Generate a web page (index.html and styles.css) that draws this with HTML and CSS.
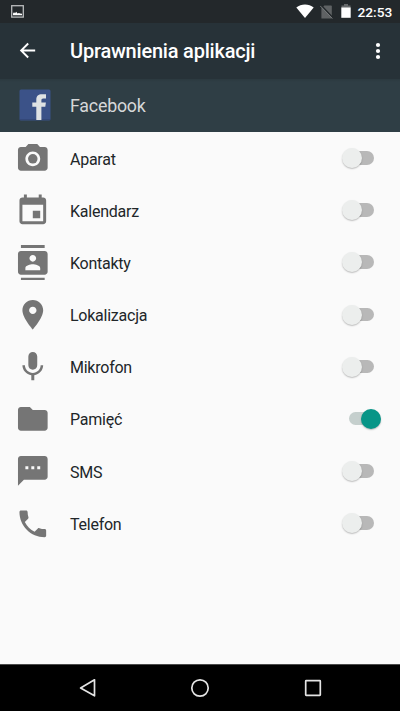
FILE: index.html
```html
<!DOCTYPE html>
<html lang="pl">
<head>
<meta charset="utf-8">
<title>Uprawnienia aplikacji</title>
<link rel="stylesheet" href="styles.css">
</head>
<body>
<div class="status">
  <svg class="shot" width="13" height="13" viewBox="0 0 13 13"><rect x=".7" y=".7" width="11.6" height="11.4" fill="none" stroke="#b9bbbc" stroke-width="1.3"/><path d="M2 10.3V8.500l1-1.200 1 1 1.200-1.500 1.300 1.700 1.500-.6 1 .6L11 8.800v1.500z" fill="#fff"/></svg>
  <svg class="wifi" width="18" height="14" viewBox="0 0 18 14"><path d="M9 14 .3 3.500C2.800 1.400 5.700.4 9 .4s6.200 1 8.700 3.100z" fill="#fff"/></svg>
  <svg class="sim" width="13" height="14" viewBox="0 0 13 14"><path d="M4.300.6h6.700q.8 0 .8.8v12H1.400V3.400z" fill="#5f6264"/><path d="M.8 0 13 12.800" stroke="#23282b" stroke-width="1.600"/><path d="M.2 .9 12.400 13.500" stroke="#777a7c" stroke-width="1"/></svg>
  <svg class="battery" width="10" height="15" viewBox="0 0 10 15"><path d="M3 0h4v1.500h2.500V4H.5V1.500H3z" fill="#66696b"/><path d="M.3 3.500h9.400v10.300H.3z" fill="#fff"/></svg>
  <span class="clock">22:53</span>
</div>
<header class="bar">
  <svg class="back" width="23" height="23" viewBox="0 0 24 24"><path fill="#fff" d="M20 11H7.830l5.590-5.590L12 4l-8 8 8 8 1.410-1.410L7.830 13H20v-2z"/></svg>
  <h1>Uprawnienia aplikacji</h1>
  <svg class="more" width="24" height="24" viewBox="0 0 24 24"><g fill="#fff"><circle cx="12" cy="6" r="2.100"/><circle cx="12" cy="12" r="2.100"/><circle cx="12" cy="18" r="2.100"/></g></svg>
</header>
<div class="app">
  <svg class="fb" width="32" height="32" viewBox="0 0 32 32"><rect x=".5" y=".5" width="31" height="31" rx="1.500" fill="#3b5288"/><path d="M.8 30.500h30.400" stroke="#344879"/><path fill="#dfe2e4" d="M17.300 31V17.800h-4v-4.200h4V10.500c0-3.700 2.100-5.300 5.600-5.300h4.100v4.300h-2.700c-1.500 0-1.900.7-1.900 2v2.100h4.500l-.6 4.200h-3.900V31z"/></svg>
  <span>Facebook</span>
</div>
<main>
  <div class="row"><svg class="icon" viewBox="0 0 24 24"><path fill-rule="evenodd" d="M9 2 7.170 4H4c-1.100 0-2 .9-2 2v12c0 1.100.9 2 2 2h16c1.100 0 2-.9 2-2V6c0-1.100-.9-2-2-2h-3.170L15 2H9zm3 15c-2.760 0-5-2.240-5-5s2.240-5 5-5 5 2.240 5 5-2.240 5-5 5z"/><circle cx="12" cy="12" r="3.200"/></svg><span>Aparat</span><i class="switch"></i></div>
  <div class="row"><svg class="icon" viewBox="0 0 24 24"><path d="M17 12h-5v5h5v-5zM16 1v2H8V1H6v2H5c-1.110 0-1.990.9-1.990 2L3 19c0 1.100.89 2 2 2h14c1.100 0 2-.9 2-2V5c0-1.100-.9-2-2-2h-1V1h-2zm3 18H5V8h14v11z"/></svg><span>Kalendarz</span><i class="switch"></i></div>
  <div class="row"><svg class="icon" viewBox="0 0 24 24"><path d="M20 0H4v2h16V0zM4 24h16v-2H4v2zM20 4H4c-1.100 0-2 .9-2 2v12c0 1.100.9 2 2 2h16c1.100 0 2-.9 2-2V6c0-1.100-.9-2-2-2zm-8 2.750c1.240 0 2.250 1.010 2.250 2.250s-1.010 2.250-2.250 2.250S9.750 10.240 9.750 9 10.760 6.750 12 6.750zM17 17H7v-1.500c0-1.670 3.330-2.500 5-2.500s5 .83 5 2.500V17z"/></svg><span>Kontakty</span><i class="switch"></i></div>
  <div class="row"><svg class="icon" viewBox="0 0 24 24"><path d="M12 2C8.130 2 5 5.130 5 9c0 5.250 7 13 7 13s7-7.750 7-13c0-3.870-3.130-7-7-7zm0 9.500c-1.380 0-2.500-1.120-2.500-2.500s1.120-2.500 2.500-2.500 2.500 1.120 2.500 2.500-1.120 2.500-2.500 2.500z"/></svg><span>Lokalizacja</span><i class="switch"></i></div>
  <div class="row"><svg class="icon" viewBox="0 0 24 24"><path d="M12 14c1.660 0 2.990-1.340 2.990-3L15 5c0-1.660-1.340-3-3-3S9 3.340 9 5v6c0 1.660 1.340 3 3 3zm5.300-3c0 3-2.540 5.100-5.300 5.100S6.700 14 6.700 11H5c0 3.410 2.720 6.230 6 6.720V21h2v-3.280c3.280-.48 6-3.300 6-6.720h-1.700z"/></svg><span>Mikrofon</span><i class="switch"></i></div>
  <div class="row"><svg class="icon" viewBox="0 0 24 24"><path d="M10 4H4c-1.100 0-1.990.9-1.990 2L2 18c0 1.100.9 2 2 2h16c1.100 0 2-.9 2-2V8c0-1.100-.9-2-2-2h-8l-2-2z"/></svg><span>Pamięć</span><i class="switch on"></i></div>
  <div class="row"><svg class="icon" viewBox="0 0 24 24"><path d="M20 2H4c-1.100 0-1.990.9-1.990 2L2 22l4-4h14c1.100 0 2-.9 2-2V4c0-1.100-.9-2-2-2zM9 11H7V9h2v2zm4 0h-2V9h2v2zm4 0h-2V9h2v2z"/></svg><span>SMS</span><i class="switch"></i></div>
  <div class="row"><svg class="icon" viewBox="0 0 24 24"><path d="M6.620 10.790c1.440 2.830 3.760 5.140 6.590 6.590l2.200-2.200c.27-.27.67-.36 1.020-.24 1.120.37 2.330.57 3.570.57.55 0 1 .45 1 1V20c0 .55-.45 1-1 1-9.390 0-17-7.610-17-17 0-.55.45-1 1-1h3.500c.55 0 1 .45 1 1 0 1.250.2 2.450.57 3.570.11.35.03.74-.25 1.020l-2.200 2.200z"/></svg><span>Telefon</span><i class="switch"></i></div>
</main>
<nav>
  <svg width="20" height="20" viewBox="0 0 20 20"><path d="M16.500 1.800v16L2.600 9.900z"/></svg>
  <svg width="20" height="20" viewBox="0 0 20 20"><circle cx="10" cy="10" r="8.200"/></svg>
  <svg width="20" height="20" viewBox="0 0 20 20"><rect x="2.700" y="2.700" width="14.600" height="14.600" rx=".5"/></svg>
</nav>
</body>
</html>
```
FILE: styles.css
```css
* { box-sizing: border-box; }
body {
  margin: 0;
  width: 400px;
  height: 711px;
  display: flex;
  flex-direction: column;
  overflow: hidden;
  background: #fafafa;
  font-family: Roboto, "Liberation Sans", sans-serif;
}
svg { display: block; flex: none; }
.status {
  height: 23px;
  flex: none;
  display: flex;
  background: #23282b;
  padding-left: 11px;
}
.shot { margin-top: 5px; }
.wifi { margin: 4px 0 0 272px; }
.sim { margin: 5px 0 0 6px; }
.battery { margin: 4px 0 0 8px; }
.clock {
  margin-left: 6.500px;
  color: #fff;
  font-size: 13.700px;
  font-weight: 500;
  line-height: 24px;
}
.bar {
  height: 56px;
  flex: none;
  display: flex;
  align-items: center;
  background: #273238;
  padding: 0 10px 0 15.500px;
}
.back { margin-top: -1px; }
h1 {
  flex: 1;
  margin: -1px 0 0 31.500px;
  color: #fff;
  font-size: 20px;
  font-weight: 500;
  line-height: 24px;
  letter-spacing: -.21px;
}
.more { margin-top: -1px; }
.app {
  height: 53px;
  flex: none;
  display: flex;
  align-items: center;
  padding-left: 19px;
  background: linear-gradient(#2b393f, #2f3e45 3px);
  color: #d6d8d9;
  font-size: 17.800px;
  letter-spacing: -.2px;
}
.fb { margin-top: -1px; }
.app span { margin: -1px 0 0 19px; }
main { flex: 1; }
.row {
  height: 52.170px;
  display: flex;
  align-items: center;
  padding: 0 19px 0 15.200px;
  color: #212629;
  font-size: 16px;
  letter-spacing: -.24px;
}
.row span { flex: 1; margin: 2.200px 0 0 19.200px; }
.icon { width: 35.600px; height: 35.600px; margin-top: .5px; fill: #757575; }
.switch {
  position: relative;
  width: 40px;
  height: 20px;
}
.switch::before {
  content: "";
  position: absolute;
  left: 8px;
  top: 3px;
  width: 25px;
  height: 13.500px;
  border-radius: 7px;
  background: #b8b8b8;
}
.switch::after {
  content: "";
  position: absolute;
  left: .5px;
  top: 0;
  width: 20px;
  height: 20px;
  border-radius: 50%;
  background: #eceeed;
  box-shadow: 0 1px 1.500px rgba(0, 0, 0, .25);
}
.switch.on::before { background: #c5cfcd; }
.switch.on::after { left: 20px; background: #079587; }
nav {
  height: 47px;
  flex: none;
  display: flex;
  justify-content: space-between;
  align-items: center;
  padding: 0 77.500px;
  border-top: 1px solid #4b4b4b;
  background: #000;
}
nav svg { fill: none; stroke: #e4e4e4; stroke-width: 1.700; stroke-linejoin: round; }
```
